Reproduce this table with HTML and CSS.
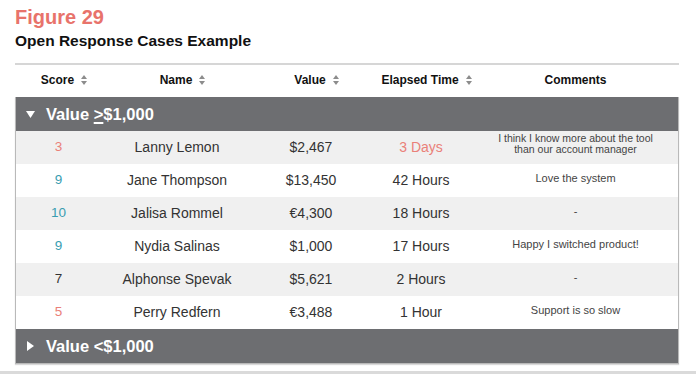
FILE: index.html
```html
<!DOCTYPE html>
<html lang="en">
<head>
    <meta charset="UTF-8">
    <meta name="viewport" content="width=device-width, initial-scale=1.0">
    <title>Figure 29 - Open Response Cases Example</title>
    <link rel="stylesheet" href="styles.css">
</head>
<body>
    <div class="figure">
        <h1 class="fig-label">Figure 29</h1>
        <h2 class="fig-title">Open Response Cases Example</h2>

        <div class="cases">
            <div class="head">
                <div class="hcell">Score<span class="sort"><svg width="6" height="10" viewBox="0 0 6 10"><path d="M3 0 L6 4 L0 4 Z M0 6 L6 6 L3 10 Z" fill="#8c8c8c"/></svg></span></div>
                <div class="hcell">Name<span class="sort"><svg width="6" height="10" viewBox="0 0 6 10"><path d="M3 0 L6 4 L0 4 Z M0 6 L6 6 L3 10 Z" fill="#8c8c8c"/></svg></span></div>
                <div class="hcell">Value<span class="sort"><svg width="6" height="10" viewBox="0 0 6 10"><path d="M3 0 L6 4 L0 4 Z M0 6 L6 6 L3 10 Z" fill="#8c8c8c"/></svg></span></div>
                <div class="hcell">Elapsed Time<span class="sort"><svg width="6" height="10" viewBox="0 0 6 10"><path d="M3 0 L6 4 L0 4 Z M0 6 L6 6 L3 10 Z" fill="#8c8c8c"/></svg></span></div>
                <div class="hcell">Comments</div>
            </div>

            <div class="body">
                <div class="group">
                    <svg class="caret" width="9" height="7" viewBox="0 0 9 7"><path d="M0 0 L9 0 L4.5 7 Z" fill="#fff"/></svg>
                    <span>Value <u>&gt;</u>$1,000</span>
                </div>

                <div class="row alt">
                    <div class="cell score low">3</div>
                    <div class="cell">Lanny Lemon</div>
                    <div class="cell">$2,467</div>
                    <div class="cell low">3 Days</div>
                    <div class="cell note two">I think I know more about the tool<br>than our account manager</div>
                </div>
                <div class="row">
                    <div class="cell score high">9</div>
                    <div class="cell">Jane Thompson</div>
                    <div class="cell">$13,450</div>
                    <div class="cell">42 Hours</div>
                    <div class="cell note">Love the system</div>
                </div>
                <div class="row alt">
                    <div class="cell score high">10</div>
                    <div class="cell">Jalisa Rommel</div>
                    <div class="cell">€4,300</div>
                    <div class="cell">18 Hours</div>
                    <div class="cell note">-</div>
                </div>
                <div class="row">
                    <div class="cell score high">9</div>
                    <div class="cell">Nydia Salinas</div>
                    <div class="cell">$1,000</div>
                    <div class="cell">17 Hours</div>
                    <div class="cell note">Happy I switched product!</div>
                </div>
                <div class="row alt">
                    <div class="cell score">7</div>
                    <div class="cell">Alphonse Spevak</div>
                    <div class="cell">$5,621</div>
                    <div class="cell">2 Hours</div>
                    <div class="cell note">-</div>
                </div>
                <div class="row">
                    <div class="cell score low">5</div>
                    <div class="cell">Perry Redfern</div>
                    <div class="cell">€3,488</div>
                    <div class="cell">1 Hour</div>
                    <div class="cell note">Support is so slow</div>
                </div>

                <div class="group">
                    <svg class="caret" width="9" height="10" viewBox="0 0 9 10"><path d="M1 0 L8 5 L1 10 Z" fill="#fff"/></svg>
                    <span>Value &lt;$1,000</span>
                </div>
            </div>
        </div>
    </div>
    <div class="page-rule"></div>
</body>
</html>
```

FILE: styles.css
```css
body {
    font-family: "Liberation Sans", Arial, sans-serif;
    margin: 0;
    background-color: #fff;
    color: #333;
}
.figure {
    padding: 6px 17px 0 15px;
}
.fig-label {
    margin: 0;
    font-size: 20px;
    line-height: 23px;
    font-weight: bold;
    color: #e8736b;
}
.fig-title {
    margin: 3px 0 0;
    font-size: 15.5px;
    line-height: 18px;
    font-weight: bold;
    color: #111;
}
.cases {
    margin-top: 13px;
    border-top: 2px solid #d6d6d6;
}
.head,
.row {
    display: grid;
    grid-template-columns: 85px 152px 116px 104px 1fr;
}
.head {
    height: 32px;
}
.hcell {
    display: flex;
    align-items: center;
    justify-content: center;
    padding-bottom: 3px;
    font-size: 12px;
    font-weight: bold;
    color: #111;
}
.sort {
    display: inline-flex;
    width: 6px;
    margin-left: 7px;
    margin-right: -13px;
}
.body {
    border: 1px solid #b9b9b9;
    border-top: none;
    box-shadow: 0 1px 1px rgba(0, 0, 0, 0.15);
}
.group {
    display: flex;
    align-items: center;
    gap: 11px;
    height: 34px;
    padding-left: 10px;
    background-color: #6d6e71;
    color: #fff;
    font-size: 16.5px;
    font-weight: bold;
}
.group u {
    text-decoration-thickness: 1.5px;
    text-underline-offset: 2px;
}
.row {
    height: 33px;
    background-color: #fff;
}
.row.alt {
    background-color: #f0f0f0;
}
.cell {
    display: flex;
    align-items: center;
    justify-content: center;
    padding-bottom: 2px;
    text-align: center;
    font-size: 14px;
    color: #333;
}
.score {
    font-size: 13.5px;
}
.low {
    color: #ea8079;
}
.high {
    color: #3a9db1;
}
.note {
    font-size: 11px;
    line-height: 11px;
    color: #444;
    padding-bottom: 5px;
}
.note.two {
    font-size: 10.5px;
    line-height: 11px;
    padding-bottom: 7px;
}
.page-rule {
    height: 3px;
    margin-top: 7px;
    background-color: #dadada;
}
```
